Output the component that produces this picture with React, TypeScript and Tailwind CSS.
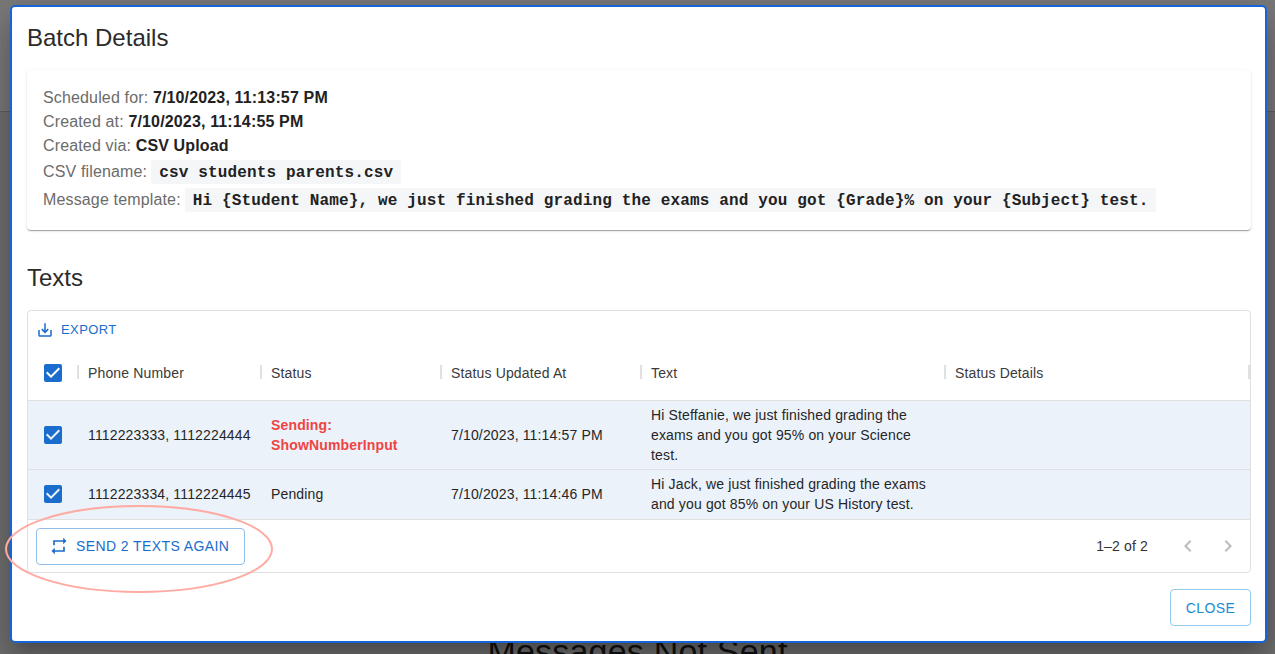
const sans = 'font-["Liberation_Sans",Arial,sans-serif]';

function Check() {
  return (
    <svg viewBox="0 0 24 24" className="h-6 w-6 fill-[#1a6dcc]">
      <path d="M19 3H5c-1.11 0-2 .9-2 2v14c0 1.1.89 2 2 2h14c1.11 0 2-.9 2-2V5c0-1.1-.89-2-2-2zm-9 14l-5-5 1.41-1.41L10 14.17l7.59-7.59L19 8l-9 9z" />
    </svg>
  );
}

const gridCols = 'grid grid-cols-[50px_183px_180px_200px_304px_304px]';

function HeaderCell({ label }: { label: string }) {
  return (
    <div className="relative flex items-center px-[10px] pb-[4px] text-sm tracking-[0.15px] text-[#3a3a3a]">
      {label}
      <span className="absolute right-[-1px] top-[16px] h-[14px] w-[2px] bg-[#e0e0e0]" />
    </div>
  );
}

function Row({ cells, className }: { cells: React.ReactNode[]; className: string }) {
  return (
    <div className={`${gridCols} ${className} border-b border-[#e0e0e0] bg-[#ebf2fa] text-sm tracking-[0.15px] text-[#262626]`}>
      <div className="flex items-center justify-center">
        <Check />
      </div>
      {cells.map((c, i) => (
        <div key={i} className="flex items-center px-[10px] leading-[20px]">
          {c}
        </div>
      ))}
    </div>
  );
}

export default function App() {
  return (
    <div className={`${sans} relative h-[654px] w-[1275px] overflow-hidden bg-[#707070]`}>
      {/* page behind the modal */}
      <div className="h-[112px] border-b border-[#5f5f5f] bg-[#7a7a7a]" />
      <div className="absolute left-0 right-0 top-[631px] text-center text-[34px] leading-[40px] tracking-[0.2px] text-[#111]">
        Messages Not Sent
      </div>

      <div className="absolute left-[10px] top-[5px] flex h-[638px] w-[1257px] flex-col rounded-[5px] border-2 border-[#1565d8] bg-white pl-[15px] pr-[14px] shadow-[0_11px_15px_-7px_rgba(0,0,0,0.2),0_24px_38px_3px_rgba(0,0,0,0.14),0_9px_46px_8px_rgba(0,0,0,0.12)]">
        <h2 className="mt-[13px] text-2xl leading-[36px] text-[#2b2b2b]">Batch Details</h2>

        <div className="mt-[14px] h-[160px] rounded-[4px] bg-white px-4 pt-[16px] tracking-[0.15px] text-[#6b6b6b] shadow-[0_2px_1px_-1px_rgba(0,0,0,0.2),0_1px_1px_0_rgba(0,0,0,0.14),0_1px_3px_0_rgba(0,0,0,0.12)]">
          <div className="leading-6">
            Scheduled for: <b className="text-[#222]">7/10/2023, 11:13:57 PM</b>
          </div>
          <div className="leading-6">
            Created at: <b className="text-[#222]">7/10/2023, 11:14:55 PM</b>
          </div>
          <div className="leading-6">
            Created via: <b className="text-[#222]">CSV Upload</b>
          </div>
          <div className="mt-[1px] flex h-[26px] items-center">
            CSV filename:
            <code className="ml-[4px] h-6 rounded-[3px] bg-[#f5f6f8] px-2 font-['Liberation_Mono',monospace] font-bold leading-[26px] text-[#222]">
              csv students parents.csv
            </code>
          </div>
          <div className="mt-[2px] flex h-[26px] items-center">
            Message template:
            <code className="ml-[4px] h-6 rounded-[3px] bg-[#f5f6f8] px-2 font-['Liberation_Mono',monospace] font-bold leading-[26px] text-[#222]">
              {'Hi {Student Name}, we just finished grading the exams and you got {Grade}% on your {Subject} test.'}
            </code>
          </div>
        </div>

        <h2 className="mt-[30px] text-2xl leading-[36px] text-[#2b2b2b]">Texts</h2>

        <div className="mt-[14px] flex h-[263px] flex-col rounded-[4px] border border-[#e0e0e0]">
          <div className="flex h-[38px] items-center pl-[8px] text-[13px] tracking-[0.4px] text-[#1a6dcc]">
            <svg viewBox="0 0 24 24" className="h-[18px] w-[18px] fill-[#1a6dcc]">
              <path d="M19 12v7H5v-7H3v7c0 1.1.9 2 2 2h14c1.1 0 2-.9 2-2v-7h-2zm-6 .67l2.59-2.58L17 11.5l-5 5-5-5 1.41-1.41L11 12.67V3h2z" />
            </svg>
            <span className="ml-[7px]">EXPORT</span>
          </div>

          <div className={`${gridCols} h-[52px] border-b border-[#e0e0e0]`}>
            <div className="relative flex items-center justify-center pb-[4px]">
              <Check />
              <span className="absolute right-[-1px] top-[16px] h-[14px] w-[2px] bg-[#e0e0e0]" />
            </div>
            <HeaderCell label="Phone Number" />
            <HeaderCell label="Status" />
            <HeaderCell label="Status Updated At" />
            <HeaderCell label="Text" />
            <HeaderCell label="Status Details" />
          </div>

          <Row
            className="h-[69px]"
            cells={[
              '1112223333, 1112224444',
              <span className="font-bold text-[#ef4444]">
                Sending:
                <br />
                ShowNumberInput
              </span>,
              '7/10/2023, 11:14:57 PM',
              'Hi Steffanie, we just finished grading the exams and you got 95% on your Science test.',
              '',
            ]}
          />
          <Row
            className="h-[50px] pb-[2px]"
            cells={[
              '1112223334, 1112224445',
              'Pending',
              '7/10/2023, 11:14:46 PM',
              'Hi Jack, we just finished grading the exams and you got 85% on your US History test.',
              '',
            ]}
          />

          <div className="flex flex-1 items-center justify-between pl-[8px] pr-[10px]">
            <button className="flex h-[37px] w-[209px] items-center rounded-[4px] border border-[#90bdec] pl-[12px] text-sm tracking-[0.4px] text-[#1a6dcc]">
              <svg viewBox="0 0 24 24" className="h-5 w-5 fill-[#1a6dcc]">
                <path d="M7 7h10v3l4-4-4-4v3H5v6h2V7zm10 10H7v-3l-4 4 4 4v-3h12v-6h-2v4z" />
              </svg>
              <span className="ml-[7px]">SEND 2 TEXTS AGAIN</span>
            </button>
            <div className="flex items-center text-sm tracking-[0.15px] text-[#333]">
              <span className="mr-[28px]">1–2 of 2</span>
              <svg viewBox="0 0 24 24" className="mr-[16px] h-6 w-6 fill-[#bdbdbd]">
                <path d="M15.41 7.41L14 6l-6 6 6 6 1.41-1.41L10.83 12z" />
              </svg>
              <svg viewBox="0 0 24 24" className="h-6 w-6 fill-[#bdbdbd]">
                <path d="M10 6L8.59 7.41 13.17 12l-4.58 4.59L10 18l6-6z" />
              </svg>
            </div>
          </div>
        </div>

        <div className="mt-[16px] flex justify-end">
          <button className="h-[37px] w-[81px] rounded-[4px] border border-[#92c9ec] text-sm tracking-[0.4px] text-[#1d8ad6]">
            CLOSE
          </button>
        </div>
      </div>

      {/* hand-drawn annotation around the button */}
      <svg className="absolute left-0 top-[500px] h-[100px] w-[280px]" viewBox="0 0 280 100" fill="none">
        <ellipse cx="139" cy="49" rx="133" ry="43" stroke="#ffaaa3" strokeWidth="2" />
      </svg>
    </div>
  );
}
